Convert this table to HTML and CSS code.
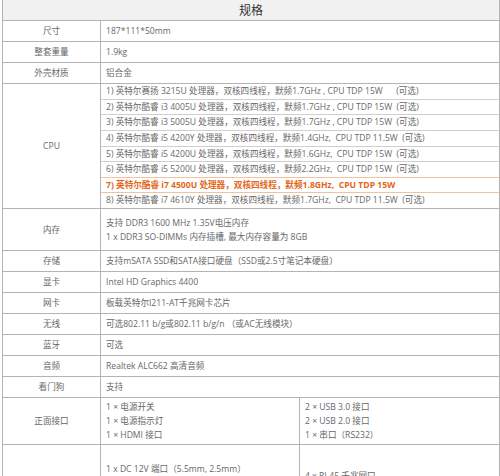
FILE: index.html
```html
<!DOCTYPE html>
<html lang="zh-CN">
<head>
<meta charset="utf-8">
<title>规格</title>
<link rel="stylesheet" href="styles.css">
</head>
<body>
<div class="wrap">
<table class="spec">
  <colgroup>
    <col class="col-label">
    <col class="col-a">
    <col class="col-b">
  </colgroup>
  <thead>
    <tr><th colspan="3" class="head">规格</th></tr>
  </thead>
  <tbody>
    <tr><td class="label">尺寸</td><td colspan="2">187*111*50mm</td></tr>
    <tr><td class="label">整套重量</td><td colspan="2">1.9kg</td></tr>
    <tr><td class="label">外壳材质</td><td colspan="2">铝合金</td></tr>
    <tr>
      <td class="label">CPU</td>
      <td colspan="2" class="cpu">
        <div class="cpu-item">1) 英特尔赛扬 3215U 处理器，双核四线程，默频1.7GHz , CPU TDP 15W &nbsp; &nbsp; &nbsp;(可选)</div>
        <div class="cpu-item">2) 英特尔酷睿 i3 4005U 处理器，双核四线程，默频1.7GHz , CPU TDP 15W &nbsp;(可选)</div>
        <div class="cpu-item">3) 英特尔酷睿 i3 5005U 处理器，双核四线程，默频1.7GHz , CPU TDP 15W &nbsp;(可选)</div>
        <div class="cpu-item">4) 英特尔酷睿 i5 4200Y 处理器，双核四线程，默频1.4GHz, &nbsp;CPU TDP 11.5W &nbsp;(可选)</div>
        <div class="cpu-item">5) 英特尔酷睿 i5 4200U 处理器，双核四线程，默频1.6GHz, &nbsp;CPU TDP 15W &nbsp;(可选)</div>
        <div class="cpu-item">6) 英特尔酷睿 i5 5200U 处理器，双核四线程，默频2.2GHz, &nbsp;CPU TDP 15W &nbsp;(可选)</div>
        <div class="cpu-item hot">7) 英特尔酷睿 i7 4500U 处理器，双核四线程，默频1.8GHz, &nbsp;CPU TDP 15W</div>
        <div class="cpu-item">8) 英特尔酷睿 i7 4610Y 处理器，双核四线程，默频1.7GHz, &nbsp;CPU TDP 11.5W &nbsp;(可选)</div>
      </td>
    </tr>
    <tr class="r-mem">
      <td class="label">内存</td>
      <td colspan="2" class="multi">支持 DDR3 1600 MHz 1.35V电压内存<br>1 x DDR3 SO-DIMMs 内存插槽, 最大内存容量为 8GB</td>
    </tr>
    <tr><td class="label">存储</td><td colspan="2">支持mSATA SSD和SATA接口硬盘（SSD或2.5寸笔记本硬盘）</td></tr>
    <tr><td class="label">显卡</td><td colspan="2">Intel HD Graphics 4400</td></tr>
    <tr><td class="label">网卡</td><td colspan="2">板载英特尔I211-AT千兆网卡芯片</td></tr>
    <tr><td class="label">无线</td><td colspan="2">可选802.11 b/g或802.11 b/g/n （或AC无线模块）</td></tr>
    <tr><td class="label">蓝牙</td><td colspan="2">可选</td></tr>
    <tr><td class="label">音频</td><td colspan="2">Realtek ALC662 高清音频</td></tr>
    <tr><td class="label">看门狗</td><td colspan="2">支持</td></tr>
    <tr class="r-front">
      <td class="label">正面接口</td>
      <td class="multi">1 × 电源开关<br>1 × 电源指示灯<br>1 × HDMI 接口</td>
      <td class="multi">2 × USB 3.0 接口<br>2 × USB 2.0 接口<br>1 × 串口（RS232）</td>
    </tr>
    <tr class="r-back">
      <td class="label">背面接口</td>
      <td class="multi">1 x DC 12V 端口（5.5mm, 2.5mm）<br>1 × 音频输出<br>1 × 麦克风输入</td>
      <td class="multi">4 x RJ-45 千兆网口<br>2 × USB 2.0 接口</td>
    </tr>
  </tbody>
</table>
</div>
</body>
</html>
```

FILE: styles.css
```css
html, body {
  margin: 0;
  padding: 0;
  background: #ffffff;
  overflow: hidden;
}

.wrap {
  padding: 0 2px 0 2px;
}

.spec {
  width: 497px;
  border-collapse: collapse;
  table-layout: fixed;
  font-family: "Open Sans", "Noto Sans CJK SC", sans-serif;
  font-size: 8.6px;
  color: #686868;
}

.col-label { width: 98px; }
.col-a { width: 199px; }
.col-b { width: 200px; }

.spec th,
.spec td {
  border: 1px solid #b4b4b4;
  padding: 0 5px;
  line-height: 20px;
  text-align: left;
  vertical-align: middle;
  white-space: nowrap;
  font-weight: normal;
}

.spec .head {
  border-top: none;
  background: #f1f1f1;
  color: #333333;
  font-size: 12px;
  text-align: center;
  line-height: 20px;
  font-family: "Noto Sans CJK SC", sans-serif;
}

.spec td.label {
  text-align: center;
}

.spec td.cpu {
  padding: 0;
}

.cpu-item {
  height: 14.625px;
  line-height: 14.625px;
  padding: 0 5px;
  border-top: 1px solid #cfcfcf;
}

.cpu-item:first-child {
  border-top: none;
}

.cpu-item.hot {
  color: #e2681b;
  font-weight: bold;
  border-top-color: #f2c29c;
  border-bottom: 1px solid #f2c29c;
  margin-bottom: -1px;
  position: relative;
}

.spec td.multi {
  line-height: 14px;
}

.r-mem td {
  height: 41px;
  padding-top: 0;
  padding-bottom: 0;
}

.r-front td {
  height: 46px;
  padding-top: 0;
  padding-bottom: 0;
}

.r-back td {
  height: 75px;
  padding-top: 0;
  padding-bottom: 0;
}
```
